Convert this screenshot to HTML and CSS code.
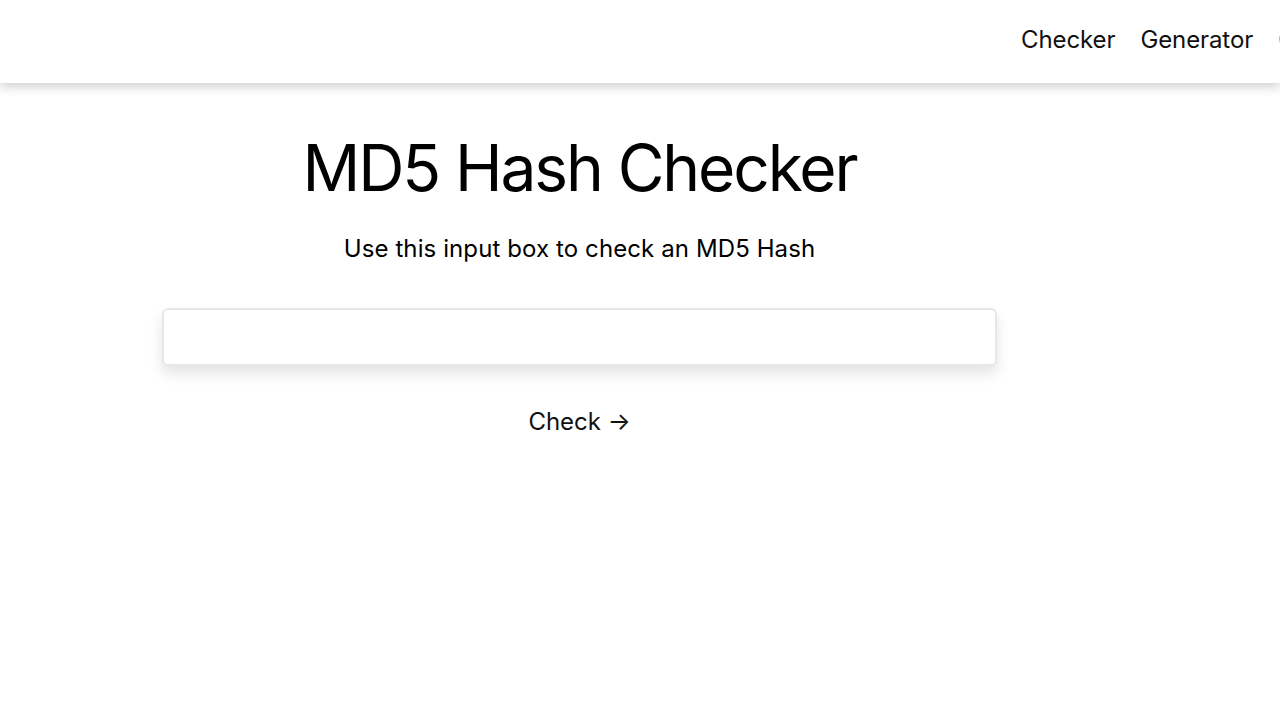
FILE: index.html
```html
<!DOCTYPE html>
<html lang="en">
<head>
<meta charset="utf-8">
<title>MD5 Hash Checker</title>
<link rel="stylesheet" href="styles.css">
</head>
<body>
<header class="site-header">
  <nav class="nav">
    <a class="nav-link" href="#">Checker</a>
    <a class="nav-link" href="#">Generator</a>
    <a class="nav-link" href="#">Contact</a>
  </nav>
</header>
<main class="main">
  <h1 class="title">MD5 Hash Checker</h1>
  <p class="subtitle">Use this input box to check an MD5 Hash</p>
  <input class="hash-input" type="text" aria-label="MD5 hash">
  <button class="check-btn" type="button">Check →</button>
</main>
</body>
</html>
```
FILE: styles.css
```css
html, body {
  margin: 0;
  padding: 0;
  overflow: hidden;
  background: #ffffff;
  font-family: Inter, "Noto Sans", sans-serif;
  color: #000000;
}
.site-header {
  height: 83px;
  background: #ffffff;
  box-shadow: 0 4px 10px rgba(0, 0, 0, 0.18);
  display: flex;
  align-items: center;
  position: relative;
  z-index: 1;
}
.nav {
  display: flex;
  gap: 25px;
  margin-left: 1021px;
  margin-top: -4px;
  white-space: nowrap;
}
.nav-link {
  font-size: 24px;
  color: #111111;
  text-decoration: none;
  letter-spacing: -0.1px;
}
.main {
  width: 835px;
  margin-left: 162px;
  display: flex;
  flex-direction: column;
  align-items: center;
}
.title {
  font-size: 64px;
  font-weight: 400;
  letter-spacing: -2.1px;
  margin: 47px 0 0;
  line-height: 1.2;
}
.subtitle {
  font-size: 24px;
  letter-spacing: 0.1px;
  margin: 27px 0 0;
}
.hash-input {
  box-sizing: border-box;
  width: 835px;
  height: 58px;
  margin-top: 45px;
  border: 2px solid #e5e7eb;
  border-radius: 6px;
  box-shadow: 0 8px 14px rgba(0, 0, 0, 0.11);
  font-size: 24px;
  font-family: inherit;
  padding: 0 16px;
  outline: none;
}
.check-btn {
  margin-top: 41px;
  background: none;
  border: 0;
  font-family: inherit;
  font-size: 24px;
  color: #111111;
  padding: 0;
  cursor: pointer;
}
```
